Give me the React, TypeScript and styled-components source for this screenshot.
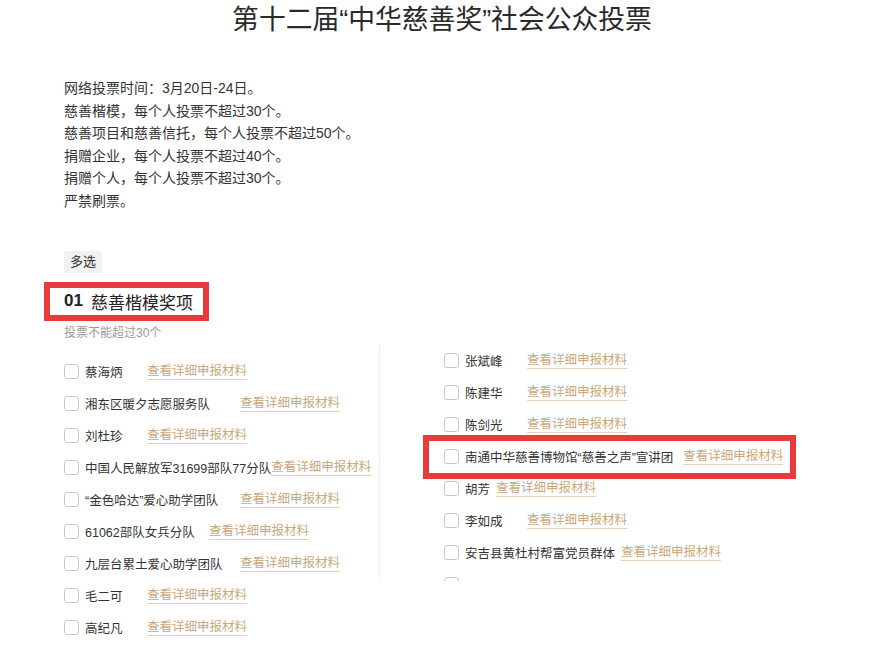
import React from 'react'
import styled, { createGlobalStyle } from 'styled-components'

const GlobalStyle = createGlobalStyle`
  html, body {
    margin: 0;
    padding: 0;
    background: #ffffff;
  }
  body {
    font-family: 'Liberation Sans', 'Noto Sans CJK SC', sans-serif;
    color: #333333;
  }
`;

const Page = styled.div`
  width: 884px;
  height: 649px;
  overflow: hidden;
  background: #ffffff;
`;

const Title = styled.h1`
  margin: 0;
  height: 40px;
  line-height: 40px;
  text-align: center;
  font-size: 26.8px;
  font-weight: 400;
  color: #2a2a2a;
`;

const Body = styled.div`
  padding-left: 64px;
`;

const Intro = styled.div`
  margin-top: 37px;
  font-size: 14px;
  line-height: 22.6px;
  color: #333333;
`;

const Badge = styled.span`
  display: inline-block;
  margin-top: 38px;
  width: 38px;
  height: 22px;
  line-height: 22px;
  text-align: center;
  font-size: 13px;
  color: #333333;
  background: #f1f1f1;
  border-radius: 2px;
`;

//red annotation frame around section title
const SectionTitle = styled.div`
  box-sizing: border-box;
  width: 165px;
  height: 39px;
  margin: 9px 0 0 -20px;
  padding-left: 14px;
  border: 6px solid #e8393b;
  display: flex;
  align-items: center;
  font-size: 17px;
  color: #222222;
`;

const SectionNo = styled.b`
  font-weight: 700;
  margin-right: 8px;
`;

const Columns = styled.div`
  display: grid;
  grid-template-columns: 315px 1fr;
`;

const LeftColumn = styled.div``;

const Hint = styled.div`
  margin-top: 5px;
  font-size: 12px;
  line-height: 14px;
  color: #9a9a9a;
`;

const List = styled.div<{ $top: number }>`
  margin-top: ${p => p.$top}px;
`;

const RightColumn = styled.div`
  margin-top: 24px;
  height: 236px;
  border-left: 1px solid #efefef;
  padding-left: 64px;
  overflow-x: visible;
  overflow-y: clip;
`;

const Row = styled.div<{ $marked?: boolean }>`
  box-sizing: border-box;
  display: flex;
  align-items: center;
  height: ${p => (p.$marked ? 44 : 32)}px;
  ${p => p.$marked && `
    width: 373px;
    margin: -6px 0 -6px -21px;
    padding-left: 15px;
    border: 6px solid #e8393b;
  `}
`;

const Check = styled.span`
  box-sizing: border-box;
  flex: none;
  width: 15px;
  height: 15px;
  border: 1px solid #c9c9c9;
  border-radius: 3px;
  background: #ffffff;
  margin-right: 6px;
`;

const Name = styled.span<{ $w?: number; $gap?: number }>`
  box-sizing: border-box;
  display: inline-block;
  min-width: ${p => (p.$w ? `${p.$w}px` : 'auto')};
  padding-right: ${p => p.$gap ?? 0}px;
  font-size: 12.5px;
  color: #333333;
  white-space: nowrap;
`;

const Detail = styled.a`
  font-size: 12.5px;
  line-height: 16px;
  color: #caa87e;
  text-decoration: none;
  border-bottom: 1px solid #e2d2bb;
  white-space: nowrap;
  cursor: pointer;
`;

type Entry = { name: string; w?: number; gap?: number; marked?: boolean; hidden?: boolean };

const leftEntries: Entry[] = [
  { name: '蔡海炳', w: 62 },
  { name: '湘东区暖夕志愿服务队', w: 155 },
  { name: '刘杜珍', w: 62 },
  { name: '中国人民解放军31699部队77分队', gap: 0 },
  { name: '“金色哈达”爱心助学团队', w: 155 },
  { name: '61062部队女兵分队', w: 124 },
  { name: '九层台累土爱心助学团队', w: 155 },
  { name: '毛二可', w: 62 },
  { name: '高纪凡', w: 62 },
];

const rightEntries: Entry[] = [
  { name: '张斌峰', w: 62 },
  { name: '陈建华', w: 62 },
  { name: '陈剑光', w: 62 },
  { name: '南通中华慈善博物馆“慈善之声”宣讲团', gap: 10, marked: true },
  { name: '胡芳', w: 31 },
  { name: '李如成', w: 62 },
  { name: '安吉县黄杜村帮富党员群体', w: 156 },
  { name: '', hidden: true },
];

const CandidateRow = ({ entry }: { entry: Entry }) => (
  <Row $marked={entry.marked}>
    <Check />
    {!entry.hidden && (
      <>
        <Name $w={entry.w} $gap={entry.gap}>{entry.name}</Name>
        <Detail>查看详细申报材料</Detail>
      </>
    )}
  </Row>
);

const rules = [
  '网络投票时间：3月20日-24日。',
  '慈善楷模，每个人投票不超过30个。',
  '慈善项目和慈善信托，每个人投票不超过50个。',
  '捐赠企业，每个人投票不超过40个。',
  '捐赠个人，每个人投票不超过30个。',
  '严禁刷票。',
];

const App = () => {
  return (
    <Page>
      <GlobalStyle />
      <Title>第十二届“中华慈善奖”社会公众投票</Title>
      <Body>
        <Intro>
          {rules.map(r => (
            <div key={r}>{r}</div>
          ))}
        </Intro>
        <Badge>多选</Badge>
        <SectionTitle>
          <SectionNo>01</SectionNo>慈善楷模奖项
        </SectionTitle>
        <Columns>
          <LeftColumn>
            <Hint>投票不能超过30个</Hint>
            <List $top={16}>
              {leftEntries.map(e => (
                <CandidateRow key={e.name} entry={e} />
              ))}
            </List>
          </LeftColumn>
          <RightColumn>
            {rightEntries.map((e, i) => (
              <CandidateRow key={i} entry={e} />
            ))}
          </RightColumn>
        </Columns>
      </Body>
    </Page>
  )
}

export default App
